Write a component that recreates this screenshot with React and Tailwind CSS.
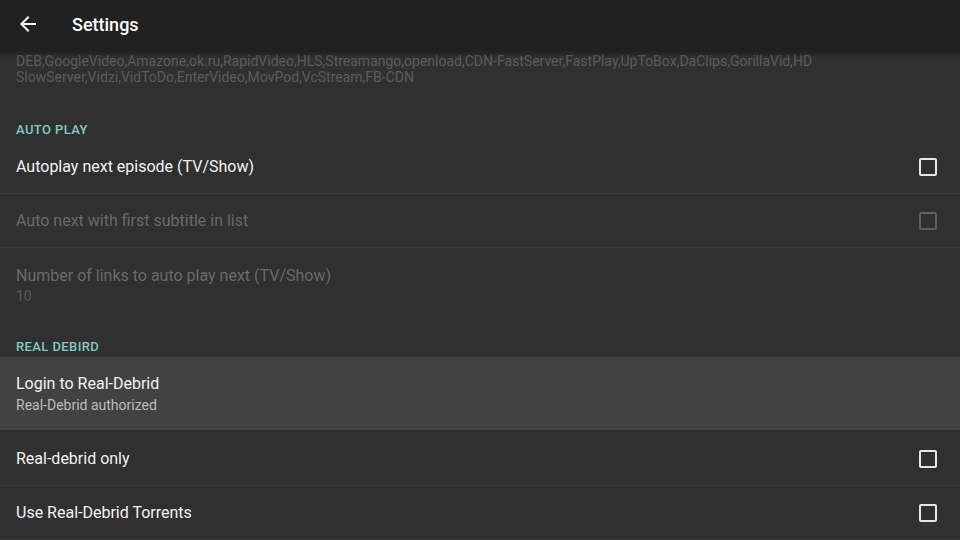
import React from 'react';

const font = { fontFamily: 'Roboto, "Noto Sans", sans-serif' };

const Checkbox = ({ disabled }) => (
  <div
    className={`w-[18px] h-[18px] rounded-[2px] border-2 ${
      disabled ? 'border-[#5e5e5e]' : 'border-[#e6e6e6]'
    }`}
  />
);

const SectionHeader = ({ title, height }) => (
  <div className={`flex items-end px-4 ${height}`}>
    <span className="text-[13px] leading-[16px] font-medium text-[#80cbc4] tracking-[0.4px]">{title}</span>
  </div>
);

const CheckRow = ({ title, disabled }) => (
  <div className="flex items-center justify-between h-[54px] pl-4 pr-[23px] border-b border-[#3b3b3b]">
    <span className={`text-[16px] leading-[20px] ${disabled ? 'text-[#6a6a6a]' : 'text-[#f2f2f2]'}`}>{title}</span>
    <Checkbox disabled={disabled} />
  </div>
);

const App = () => {
  return (
    <div className="w-[960px] h-[540px] overflow-hidden bg-[#303030] flex flex-col" style={font}>
      {/* toolbar */}
      <div className="relative z-10 h-[52px] shrink-0 bg-[#212121] flex items-center pb-1 shadow-[0_2px_4px_rgba(0,0,0,0.35)]">
        <svg className="ml-4" width="24" height="24" viewBox="0 0 24 24" fill="#ffffff">
          <path d="M20 11H7.83l5.59-5.59L12 4l-8 8 8 8 1.41-1.41L7.83 13H20v-2z" />
        </svg>
        <span className="ml-8 text-[18px] font-medium text-white">Settings</span>
      </div>

      <div className="flex flex-col">
        <div className="px-4 pt-px text-[14px] leading-[16px] text-[#5c5c5c]">
          <div>DEB,GoogleVideo,Amazone,ok.ru,RapidVideo,HLS,Streamango,openload,CDN-FastServer,FastPlay,UpToBox,DaClips,GorillaVid,HD</div>
          <div>SlowServer,Vidzi,VidToDo,EnterVideo,MovPod,VcStream,FB-CDN</div>
        </div>

        <SectionHeader title="AUTO PLAY" height="h-[55px] pb-[2px]" />
        <CheckRow title="Autoplay next episode (TV/Show)" />
        <CheckRow title="Auto next with first subtitle in list" disabled />

        <div className="h-[72px] px-4 pt-[17px] flex flex-col">
          <span className="text-[16px] leading-[22px] text-[#6a6a6a]">Number of links to auto play next (TV/Show)</span>
          <span className="text-[14px] leading-[18px] text-[#5a5a5a]">10</span>
        </div>

        <SectionHeader title="REAL DEBIRD" height="h-[37px] pb-[2px]" />

        <div className="border-b-2 border-[#2b2b2b]">
          <div className="h-[73px] bg-[#424242] px-4 pt-[16px] flex flex-col">
            <span className="text-[16px] leading-[22px] text-[#f2f2f2]">Login to Real-Debrid</span>
            <span className="text-[14px] leading-[20px] text-[#bdbdbd]">Real-Debrid authorized</span>
          </div>
        </div>

        <CheckRow title="Real-debrid only" />
        <CheckRow title="Use Real-Debrid Torrents" />
      </div>
    </div>
  );
};

export default App;
